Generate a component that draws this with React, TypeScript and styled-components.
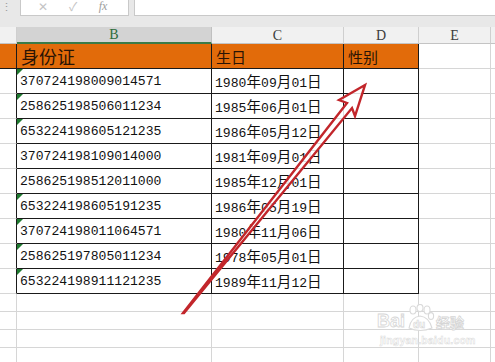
import React from "react";
import styled, { createGlobalStyle } from "styled-components";

const ids = [
  "370724198009014571",
  "258625198506011234",
  "653224198605121235",
  "370724198109014000",
  "258625198512011000",
  "653224198605191235",
  "370724198011064571",
  "258625197805011234",
  "653224198911121235",
];

const dates = [
  "1980年09月01日",
  "1985年06月01日",
  "1986年05月12日",
  "1981年09月01日",
  "1985年12月01日",
  "1986年05月19日",
  "1980年11月06日",
  "1978年05月01日",
  "1989年11月12日",
];

// rows stored as text get the little green corner
const asText = [true, true, true, false, false, true, true, true, true];

const DARK = "#1a1a1a";
const GRID = "#d6d6d6";

const GlobalStyle = createGlobalStyle`
  html, body {
    margin: 0;
    padding: 0;
    background: #fff;
    overflow: hidden;
  }
  body {
    font-family: "Liberation Sans", "Noto Sans CJK SC", sans-serif;
  }
`;

export default function App() {
  return (
    <>
      <GlobalStyle />
      <Page>
        <FormulaBar>
          <Grip>⋮</Grip>
          <NameBox>
            <BarIcon>✕</BarIcon>
            <BarIcon>✓</BarIcon>
            <Fx>fx</Fx>
          </NameBox>
          <FormulaInput />
        </FormulaBar>
        <Sheet>
          <ColHead />
          <ColHead $active>B</ColHead>
          <ColHead>C</ColHead>
          <ColHead>D</ColHead>
          <ColHead>E</ColHead>
          <ColHead />

          <Cell $bg="#e26b0a" $r={DARK} $b={DARK} />
          <Cell $bg="#e26b0a" $r={DARK} $b={DARK}>
            <Title $size={18}>身份证</Title>
          </Cell>
          <Cell $bg="#e26b0a" $r={DARK} $b={DARK}>
            <Title $size={15}>生日</Title>
          </Cell>
          <Cell $bg="#e26b0a" $r={DARK} $b={DARK}>
            <Title $size={15}>性别</Title>
          </Cell>
          <Cell />
          <Cell />

          {ids.map((id, i) => (
            <React.Fragment key={id}>
              <Cell $r={DARK} />
              <Cell $r={DARK} $b={DARK}>
                {asText[i] && <Corner />}
                <Value>{id}</Value>
              </Cell>
              <Cell $r={DARK} $b={DARK}>
                <Value>
                  {dates[i].split("").map((ch, k) =>
                    /\d/.test(ch) ? ch : <Unit key={k}>{ch}</Unit>
                  )}
                </Value>
              </Cell>
              <Cell $r={DARK} $b={DARK} />
              <Cell />
              <Cell />
            </React.Fragment>
          ))}

          {[0, 1, 2, 3].map((r) => (
            <React.Fragment key={r}>
              <Cell />
              <Cell />
              <Cell />
              <Cell />
              <Cell />
              <Cell />
            </React.Fragment>
          ))}
        </Sheet>

        <Arrow width="495" height="362" viewBox="0 0 495 362">
          <polygon
            points="365,85 339,100 347,103 183,313 184,313 352,108 355,116"
            fill="#fff"
            fillOpacity="0.85"
            stroke="#c2262b"
            strokeWidth="2.4"
            strokeLinejoin="miter"
          />
        </Arrow>

        <Watermark>
          <Brand>
            <span>Bai</span>
            <Paw width="30" height="28" viewBox="0 0 30 28">
              <g fill="#fff" stroke="#dadada" strokeWidth="1.1">
                <ellipse cx="8" cy="6" rx="3" ry="4" />
                <ellipse cx="15" cy="4" rx="3" ry="3.6" />
                <ellipse cx="22" cy="6" rx="3" ry="4" />
                <ellipse cx="26" cy="12" rx="2.6" ry="3.4" />
                <path d="M4 24 Q6 13 15 12 Q24 13 27 24 Q15 29 4 24 Z" />
              </g>
              <text x="8" y="24" fontSize="10" fontFamily="Liberation Sans, sans-serif" fill="#fff" stroke="#d6d6d6" strokeWidth="0.6" fontWeight="bold">
                du
              </text>
            </Paw>
            <Cn>经验</Cn>
          </Brand>
          <Site>jingyan.baidu.com</Site>
        </Watermark>
      </Page>
    </>
  );
}

const Page = styled.div`
  position: relative;
  width: 495px;
  height: 362px;
  overflow: hidden;
  background: #fff;
`;

const FormulaBar = styled.div`
  display: flex;
  align-items: stretch;
  height: 27px;
  padding-bottom: 11px;
  box-sizing: border-box;
  background: #e8e8e8;
`;

const Grip = styled.div`
  width: 19px;
  font-size: 11px;
  color: #9a9a9a;
  padding-left: 1px;
  line-height: 14px;
`;

const NameBox = styled.div`
  width: 109px;
  display: flex;
  align-items: center;
  justify-content: space-around;
  padding: 0 10px 0 6px;
  box-sizing: border-box;
  background: #fff;
  border: 1px solid #c9c9c9;
  border-top: none;
`;

const BarIcon = styled.span`
  font-size: 12px;
  color: #c4c4c4;
  line-height: 13px;
  margin-top: -1px;
`;

const Fx = styled.span`
  font-family: "Liberation Serif", serif;
  font-style: italic;
  font-size: 12px;
  line-height: 13px;
  color: #9d9d9d;
  margin-top: -2px;
`;

const FormulaInput = styled.div`
  flex: 1;
  margin-left: 5px;
  background: #fff;
  border: 1px solid #c9c9c9;
  border-top: none;
  border-right: none;
`;

const Sheet = styled.div`
  display: grid;
  grid-template-columns: 17px 195px 132px 75px 72px 1fr;
  grid-template-rows: 17px repeat(10, 25px) repeat(4, 18px);
`;

const ColHead = styled.div<{ $active?: boolean }>`
  box-sizing: border-box;
  display: flex;
  align-items: center;
  justify-content: center;
  font-family: "Liberation Serif", serif;
  font-size: 14px;
  color: ${(p) => (p.$active ? "#2c6b3a" : "#3c3c3c")};
  background: ${(p) => (p.$active ? "#d3d3d3" : "#f1f1f1")};
  border-right: 1px solid ${(p) => (p.$active ? "#c0c0c0" : "#cfcfcf")};
  border-bottom: ${(p) => (p.$active ? "2px solid #3b7a47" : "1px solid #c4c4c4")};
  padding-top: 1px;
`;

const Cell = styled.div<{ $bg?: string; $r?: string; $b?: string }>`
  position: relative;
  box-sizing: border-box;
  display: flex;
  align-items: center;
  padding: 2px 0 0 4px;
  background: ${(p) => p.$bg ?? "#fff"};
  border-right: 1px solid ${(p) => p.$r ?? GRID};
  border-bottom: 1px solid ${(p) => p.$b ?? GRID};
  overflow: hidden;
  white-space: nowrap;
`;

const Title = styled.span<{ $size: number }>`
  font-family: "Noto Sans CJK SC", sans-serif;
  font-size: ${(p) => p.$size}px;
  line-height: 1;
  color: #2a1405;
  margin-top: -2px;
`;

const Value = styled.span`
  font-family: "Liberation Mono", "Noto Sans CJK SC", monospace;
  font-size: 13.1px;
  color: #111;
  line-height: 16px;
  margin-left: -1px;
`;

const Unit = styled.span`
  font-family: "Noto Sans CJK SC", sans-serif;
  font-size: 14.6px;
  line-height: 16px;
`;

const Corner = styled.div`
  position: absolute;
  left: 0;
  top: 0;
  width: 0;
  height: 0;
  border-top: 6px solid #1f7a30;
  border-right: 6px solid transparent;
`;

const Arrow = styled.svg`
  position: absolute;
  left: 0;
  top: 0;
  pointer-events: none;
`;

const Watermark = styled.div`
  position: absolute;
  left: 377px;
  top: 304px;
  display: flex;
  flex-direction: column;
  align-items: flex-start;
  pointer-events: none;
`;

const Brand = styled.div`
  display: flex;
  align-items: flex-end;
  font-family: "Liberation Sans", sans-serif;
  font-weight: bold;
  font-size: 18px;
  line-height: 1;
  color: #fff;
  -webkit-text-stroke: 0.8px #d6d6d6;
`;

const Paw = styled.svg`
  margin: 0 1px -2px 0;
`;

const Cn = styled.span`
  font-family: "Noto Sans CJK SC", sans-serif;
  font-size: 14px;
  margin-bottom: 1px;
`;

const Site = styled.div`
  margin-top: 4px;
  margin-left: 3px;
  font-family: "Liberation Sans", sans-serif;
  font-size: 10.5px;
  font-weight: bold;
  color: #fff;
  -webkit-text-stroke: 0.5px #dadada;
  letter-spacing: 0.2px;
`;
